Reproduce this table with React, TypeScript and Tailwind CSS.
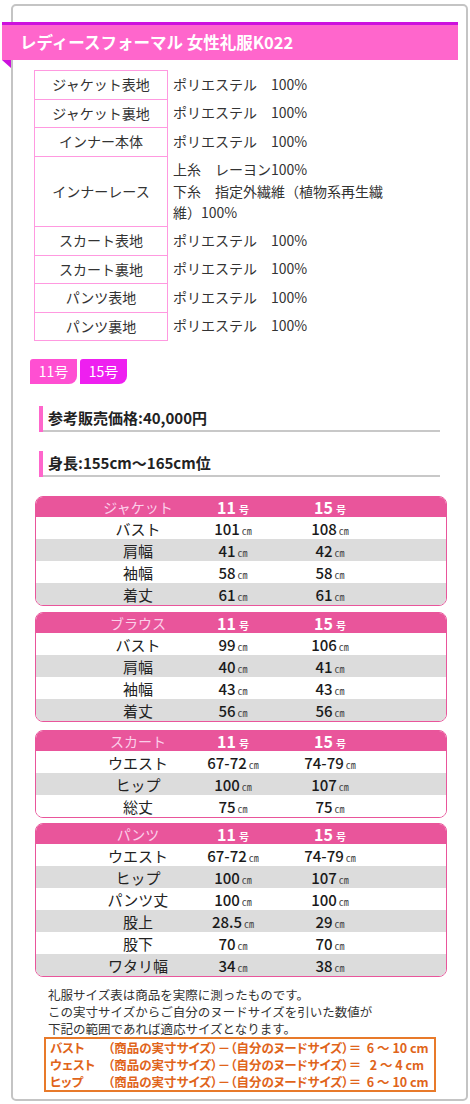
import React from 'react';

const materials: [string, string[]][] = [
  ['ジャケット表地', ['ポリエステル　100%']],
  ['ジャケット裏地', ['ポリエステル　100%']],
  ['インナー本体', ['ポリエステル　100%']],
  ['インナーレース', ['上糸　レーヨン100%', '下糸　指定外繊維（植物系再生繊維）100%']],
  ['スカート表地', ['ポリエステル　100%']],
  ['スカート裏地', ['ポリエステル　100%']],
  ['パンツ表地', ['ポリエステル　100%']],
  ['パンツ裏地', ['ポリエステル　100%']],
];

type SizeRow = [string, string, string];

const jacket: SizeRow[] = [
  ['バスト', '101', '108'],
  ['肩幅', '41', '42'],
  ['袖幅', '58', '58'],
  ['着丈', '61', '61'],
];
const blouse: SizeRow[] = [
  ['バスト', '99', '106'],
  ['肩幅', '40', '41'],
  ['袖幅', '43', '43'],
  ['着丈', '56', '56'],
];
const skirt: SizeRow[] = [
  ['ウエスト', '67-72', '74-79'],
  ['ヒップ', '100', '107'],
  ['総丈', '75', '75'],
];
const pants: SizeRow[] = [
  ['ウエスト', '67-72', '74-79'],
  ['ヒップ', '100', '107'],
  ['パンツ丈', '100', '100'],
  ['股上', '28.5', '29'],
  ['股下', '70', '70'],
  ['ワタリ幅', '34', '38'],
];

function Value({ n }: { n: string }) {
  return (
    <span className="text-center">
      <span className="text-[15px] font-medium text-[#1a1a1a]">{n}</span>
      <span className="ml-[2px] text-[10px] text-[#444]">㎝</span>
    </span>
  );
}

function SizeTable({ title, rows, className }: { title: string; rows: SizeRow[]; className: string }) {
  return (
    <div className={`ml-[22px] w-[412px] overflow-hidden rounded-[8px] border-[1.5px] border-[#e9559b] ${className}`}>
      <div className="grid h-[20px] grid-cols-[100px_90px_104px] items-center bg-[#e9559b] pl-[52px] leading-none">
        <span className="text-center text-[14px] text-[#fbd0ea]">{title}</span>
        <span className="text-center font-bold text-white">
          <span className="text-[16px]">11</span>
          <span className="ml-[3px] text-[10px]">号</span>
        </span>
        <span className="text-center font-bold text-white">
          <span className="text-[16px]">15</span>
          <span className="ml-[3px] text-[10px]">号</span>
        </span>
      </div>
      {rows.map((r, i) => (
        <div
          key={r[0]}
          className={`grid h-[22px] grid-cols-[100px_90px_104px] items-center pl-[52px] leading-none ${
            i % 2 === 1 ? 'bg-[#dcdcdc]' : 'bg-white'
          }`}
        >
          <span className="text-center text-[15px] text-[#222]">{r[0]}</span>
          <Value n={r[1]} />
          <Value n={r[2]} />
        </div>
      ))}
    </div>
  );
}

function Heading({ text, className }: { text: string; className: string }) {
  return (
    <div className={`mx-[26px] flex h-[26px] ${className}`}>
      <div className="w-[4px] bg-[#ff66cc]" />
      <div className="flex flex-1 items-center border-b-2 border-[#c8c8c8] pl-[5px] text-[15px] font-bold text-[#222]">
        {text}
      </div>
    </div>
  );
}

const formula = '（商品の実寸サイズ）－（自分のヌードサイズ）＝';

export default function App() {
  return (
    <div className="h-[1104px] w-[470px] bg-white pt-[4px] font-['Noto_Sans_CJK_JP',sans-serif]">
      <div className="ml-[11px] w-[457px] rounded-[5px] border-2 border-[#c4c4c4] pb-[7px]">
        {/* title ribbon */}
        <div className="relative mt-[16px] -ml-[11px] w-[456px]">
          <div className="flex h-[38px] items-center border-t-[3px] border-[#cc11dd] bg-[#ff66cc] pl-[18px] text-[16.5px] font-bold text-white">
            レディースフォーマル 女性礼服K022
          </div>
          <svg className="absolute left-0 top-[38px]" width="9" height="8" viewBox="0 0 9 8">
            <polygon points="0,0 9,0 9,8" fill="#cc11dd" />
          </svg>
        </div>

        {/* materials */}
        <table className="mt-[10px] ml-[21px] border-collapse text-[14px] leading-[21.5px] text-[#333]">
          <tbody>
            {materials.map(([k, v]) => (
              <tr key={k}>
                <td className="w-[133px] border border-[#ff99e0] py-[3px] text-center align-middle">{k}</td>
                <td className="w-[226px] py-[3px] pl-[5px] align-top">
                  {v.map((line) => (
                    <div key={line}>{line}</div>
                  ))}
                </td>
              </tr>
            ))}
          </tbody>
        </table>

        {/* size tabs */}
        <div className="mt-[18px] ml-[17px] flex gap-[3px]">
          <div className="flex h-[25px] w-[47px] items-center justify-center rounded-tl-[3px] rounded-br-[8px] bg-[#ff4fd2] text-[14px] text-white">
            11号
          </div>
          <div className="flex h-[25px] w-[47px] items-center justify-center rounded-tl-[3px] rounded-br-[8px] bg-[#ee1ff0] text-[14px] text-white">
            15号
          </div>
        </div>

        <Heading text="参考販売価格:40,000円" className="mt-[22px]" />
        <Heading text="身長:155cm～165cm位" className="mt-[19px]" />

        <SizeTable title="ジャケット" rows={jacket} className="mt-[19px]" />
        <SizeTable title="ブラウス" rows={blouse} className="mt-[6px]" />
        <SizeTable title="スカート" rows={skirt} className="mt-[8px]" />
        <SizeTable title="パンツ" rows={pants} className="mt-[5px]" />

        {/* notes */}
        <div className="mt-[9px] ml-[35px] text-[12.5px] leading-[17px] text-[#333]">
          <p>礼服サイズ表は商品を実際に測ったものです。</p>
          <p>この実寸サイズからご自分のヌードサイズを引いた数値が</p>
          <p>下記の範囲であれば適応サイズとなります。</p>
        </div>
        <div className="mt-[0px] ml-[31px] w-[392px] border-2 border-[#e87a2a] pl-[4px] text-[12.5px] font-bold leading-[17px] text-[#e0641a] [font-feature-settings:'palt']">
          <div className="flex whitespace-pre">
            <span className="w-[58px]">バスト</span>
            <span>{formula}  6 ～ 10 cm</span>
          </div>
          <div className="flex whitespace-pre">
            <span className="w-[58px]">ウェスト</span>
            <span>{formula}   2 ～ 4 cm</span>
          </div>
          <div className="flex whitespace-pre">
            <span className="w-[58px]">ヒップ</span>
            <span>{formula}  6 ～ 10 cm</span>
          </div>
        </div>
      </div>
    </div>
  );
}
